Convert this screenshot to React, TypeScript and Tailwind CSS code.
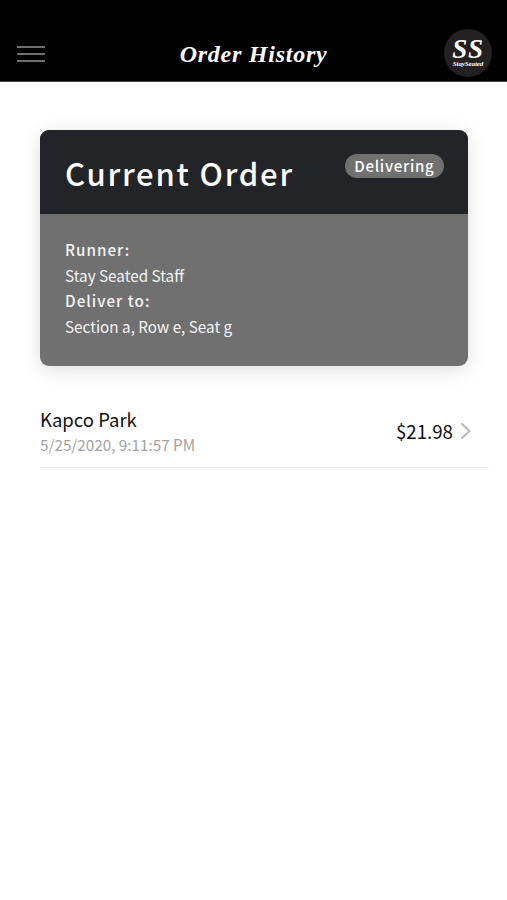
import React from 'react';

interface Order {
  venue: string;
  date: string;
  total: string;
}

const orders: Order[] = [
  { venue: 'Kapco Park', date: '5/25/2020, 9:11:57 PM', total: '$21.98' },
];

const Logo: React.FC = () => (
  <div className="flex h-12 w-12 flex-col items-center rounded-full bg-[#222021] pt-[9px] font-['Liberation_Serif',serif] font-bold italic text-white">
    <span className="text-[27px] leading-[23px] tracking-[0.8px]">SS</span>
    <span className="text-[7px] leading-[7px] tracking-[-0.1px]">StaySeated</span>
  </div>
);

const Header: React.FC = () => (
  <header className="flex h-[82px] items-end justify-between border-b border-[#4a4a4a] bg-black pr-[15px] pb-1 pl-[17px]">
    <button aria-label="Menu" className="mb-[15px] flex w-[46px] flex-col gap-[5px]">
      <span className="h-[2px] w-7 bg-[#6f6f6f]" />
      <span className="h-[2px] w-7 bg-[#6f6f6f]" />
      <span className="h-[2px] w-7 bg-[#6f6f6f]" />
    </button>
    <h1 className="mb-[7px] font-['Liberation_Serif',serif] text-[24px] leading-8 font-bold tracking-[0.75px] text-white italic">
      Order History
    </h1>
    <Logo />
  </header>
);

const CurrentOrder: React.FC = () => (
  <section className="overflow-hidden rounded-[9px] bg-[#707070] text-white shadow-[0_4px_20px_rgba(0,0,0,0.13)]">
    <div className="flex h-[84px] items-start justify-between bg-[#222427] pr-6 pl-[25px]">
      <h2 className="mt-[19px] text-[31px] leading-[48px] font-medium tracking-[1.8px]">Current Order</h2>
      <span className="mt-6 flex h-6 items-center rounded-full bg-[#707070] pr-[9.5px] pl-[9px] text-[15px] leading-6 font-medium tracking-[0.75px]">
        Delivering
      </span>
    </div>
    <div className="flex h-[152px] flex-col pt-[23px] pl-[25px] text-[15.25px] leading-[25.6px] text-[#f4f4f4]">
      <span className="font-medium tracking-[1px]">Runner:</span>
      <span>Stay Seated Staff</span>
      <span className="font-medium tracking-[1px]">Deliver to:</span>
      <span>Section a, Row e, Seat g</span>
    </div>
  </section>
);

const OrderRow: React.FC<{ order: Order }> = ({ order }) => (
  <li className="flex h-[72px] items-center justify-between border-b border-[#efefef] pr-[18px] pb-[2px]">
    <div className="flex flex-col">
      <span className="text-[18.5px] leading-[26px] text-[#111]">{order.venue}</span>
      <span className="text-[15.25px] leading-6 text-[#a3a3a3]">{order.date}</span>
    </div>
    <div className="flex items-center gap-[7px]">
      <span className="text-[18.7px] leading-7 text-[#111]">{order.total}</span>
      <svg width="11" height="18" viewBox="0 0 11 18" fill="none" stroke="#b8b8b8" strokeWidth="2">
        <path d="M1.5 1.5 9.5 9l-8 7.5" />
      </svg>
    </div>
  </li>
);

const App: React.FC = () => {
  return (
    <div className="min-h-screen bg-white font-['Noto_Sans_CJK_SC',sans-serif]">
      <Header />
      <main className="pt-12 pl-10">
        <div className="pr-[39px]">
          <CurrentOrder />
        </div>
        <ul className="mt-[30px] mr-[18px]">
          {orders.map((order) => (
            <OrderRow key={order.date} order={order} />
          ))}
        </ul>
      </main>
    </div>
  );
};

export default App;
